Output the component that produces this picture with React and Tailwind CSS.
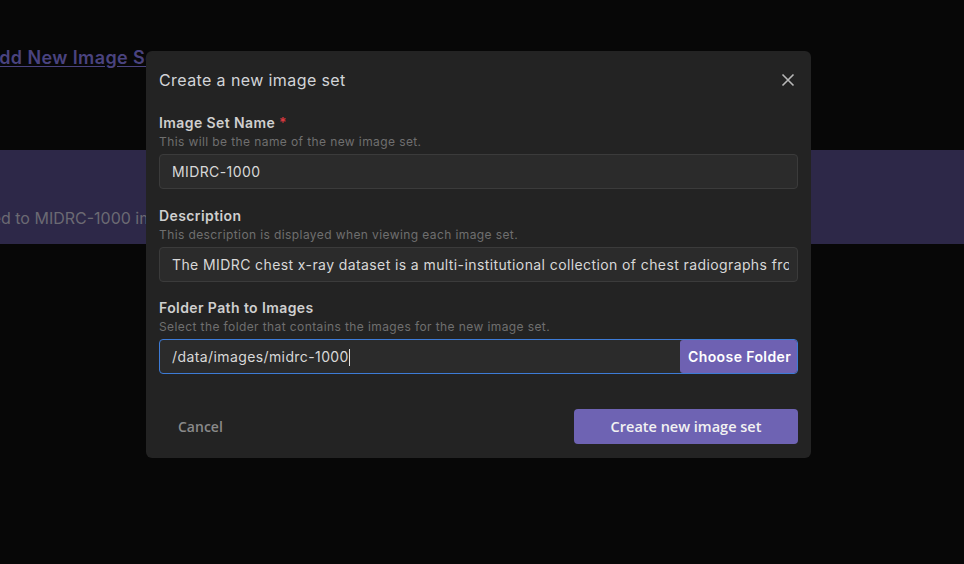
import React from "react";

export default function App() {
  return (
    <div className="relative w-[964px] h-[564px] overflow-hidden bg-[#070707] tracking-[0.025em]" style={{ fontFamily: 'Inter, "DejaVu Sans", sans-serif' }}>
      {/* underlying page */}
      <div className="flex flex-col">
        <div className="h-[44px]" />
        <a className="-ml-[14px] text-[18px] font-semibold text-[#4a437f] underline underline-offset-2 leading-[28px] whitespace-nowrap">Add New Image Set</a>
        <div className="h-[78px]" />
        <div className="h-[94px] bg-[#2d2848] flex items-end pb-[14px]">
          <span className="-ml-[39px] text-[16px] tracking-normal text-[#6b6a73] whitespace-nowrap">Added to MIDRC-1000 image set</span>
        </div>
      </div>

      {/* dialog */}
      <div className="absolute left-[146px] top-[51px] w-[665px] h-[407px] rounded-[6px] bg-[#232323] px-[13px] flex flex-col">
        <div className="flex items-center justify-between h-[58px] mb-[4px]">
          <h2 className="text-[16px] text-[#d2d4d8]">Create a new image set</h2>
          <button className="mr-[2px] text-[#b8b8b8]">
            <svg width="16" height="16" viewBox="0 0 16 16" fill="none" stroke="currentColor" strokeWidth="1.6">
              <path d="M2.5 2.5l11 11M13.5 2.5l-11 11" />
            </svg>
          </button>
        </div>

        <div className="flex flex-col">
          <label className="text-[14px] font-semibold text-[#cfcfcf] leading-[20px]">
            Image Set Name <span className="text-[#d9383f]">*</span>
          </label>
          <p className="text-[12px] text-[#6f6f6f] leading-[18px] mb-[3px]">This will be the name of the new image set.</p>
          <div className="h-[35px] rounded-[4px] border border-[#3b3b3b] bg-[#2b2b2b] flex items-center px-[12px] text-[14px] text-[#d8d8d8]">MIDRC-1000</div>
        </div>

        <div className="flex flex-col mt-[17px]">
          <label className="text-[14px] font-semibold text-[#cfcfcf] leading-[20px]">Description</label>
          <p className="text-[12px] text-[#6f6f6f] leading-[18px] mb-[3px]">This description is displayed when viewing each image set.</p>
          <div className="h-[35px] rounded-[4px] border border-[#3b3b3b] bg-[#2b2b2b] flex items-center pl-[12px] pr-[8px] text-[14px] text-[#d8d8d8] overflow-hidden">
            <span className="whitespace-nowrap overflow-hidden">The MIDRC chest x-ray dataset is a multi-institutional collection of chest radiographs from</span>
          </div>
        </div>

        <div className="flex flex-col mt-[16px]">
          <label className="text-[14px] font-semibold text-[#cfcfcf] leading-[20px]">Folder Path to Images</label>
          <p className="text-[12px] text-[#6f6f6f] leading-[18px] mb-[3px]">Select the folder that contains the images for the new image set.</p>
          <div className="h-[35px] rounded-[4px] border border-[#3d7bd6] bg-[#2b2b2b] flex items-center text-[14px] text-[#d8d8d8]">
            <span className="flex-1 pl-[12px] whitespace-nowrap">/data/images/midrc-1000<span className="inline-block w-px h-[17px] bg-[#e0e0e0] align-middle -mt-[2px]" /></span>
            <button className="h-[33px] w-[117px] rounded-[3px] bg-[#6e61b2] text-white text-[14px] font-semibold whitespace-nowrap overflow-hidden pl-[8px] text-left">Choose Folder</button>
          </div>
        </div>

        <div className="flex items-center justify-between mt-[35px] tracking-normal" style={{ fontFamily: '"Open Sans", sans-serif' }}>
          <button className="ml-[19px] text-[14px] font-semibold text-[#8a8a8a]">Cancel</button>
          <button className="h-[35px] w-[224px] rounded-[4px] bg-[#6e63b3] text-[14.5px] font-semibold text-[#f2f2f2]">Create new image set</button>
        </div>
      </div>
    </div>
  );
}
